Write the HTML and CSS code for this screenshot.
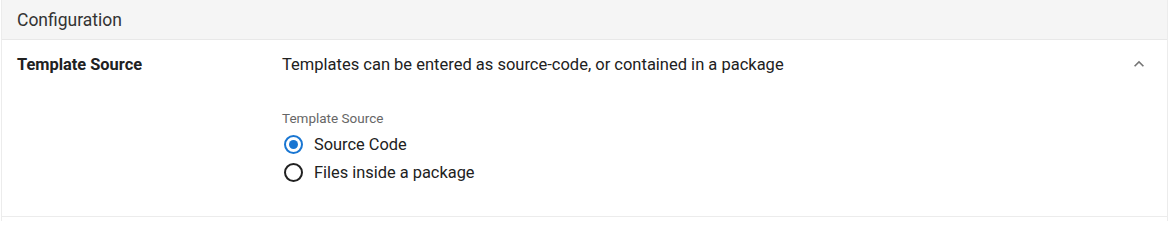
FILE: index.html
```html
<!DOCTYPE html>
<html>
<head>
<meta charset="utf-8">
<title>Configuration</title>
<link rel="stylesheet" href="styles.css">
</head>
<body>
<div class="panel">
  <div class="panel-head">Configuration</div>
  <div class="panel-row">
    <div class="row-label">Template Source</div>
    <div class="row-body">
      <div class="row-desc">Templates can be entered as source-code, or contained in a package</div>
      <div class="field">
        <div class="field-label">Template Source</div>
        <label class="radio checked"><span class="dot"></span>Source Code</label>
        <label class="radio"><span class="dot"></span>Files inside a package</label>
      </div>
    </div>
    <div class="row-toggle">
      <svg width="20" height="20" viewBox="0 0 24 24"><path d="M7.41 15.41 12 10.83l4.59 4.58L18 14l-6-6-6 6z" fill="#757575"/></svg>
    </div>
  </div>
</div>
</body>
</html>
```

FILE: styles.css
```css
html,body {
  margin: 0;
  padding: 0;
  background: #fff;
  font-family: Roboto, "Liberation Sans", sans-serif;
  color: #212121;
}
.panel {
  margin: 0 5px 0 1px;
  border-left: 1px solid #ececec;
  border-right: 1px solid #ececec;
  padding-bottom: 4px;
}
.panel-head {
  height: 39px;
  line-height: 41px;
  padding-left: 15px;
  font-size: 17.5px;
  color: #333;
  background: #f5f5f5;
  border-bottom: 1px solid #e8e8e8;
}
.panel-row {
  display: flex;
  height: 177px;
  border-bottom: 1px solid #ececec;
  box-sizing: border-box;
}
.row-label {
  width: 265px;
  padding-left: 15px;
  padding-top: 15px;
  font-size: 16.4px;
  font-weight: bold;
  line-height: 20px;
}
.row-body {
  flex: 1;
  padding-top: 15px;
}
.row-desc {
  font-size: 16.5px;
  line-height: 20px;
}
.field {
  margin-top: 35px;
}
.field-label {
  font-size: 13.5px;
  color: #666;
  line-height: 16px;
  margin-bottom: 4px;
}
.radio {
  display: flex;
  align-items: center;
  height: 28px;
  font-size: 16.4px;
}
.dot {
  width: 15px;
  height: 15px;
  border: 2px solid #212121;
  border-radius: 50%;
  margin: 0 11px 0 2px;
  position: relative;
}
.radio.checked .dot {
  border-color: #1976d2;
}
.radio.checked .dot::after {
  content: "";
  position: absolute;
  left: 3px;
  top: 3px;
  width: 9px;
  height: 9px;
  border-radius: 50%;
  background: #1976d2;
}
.row-toggle {
  width: 38px;
  padding-top: 14px;
}
```
